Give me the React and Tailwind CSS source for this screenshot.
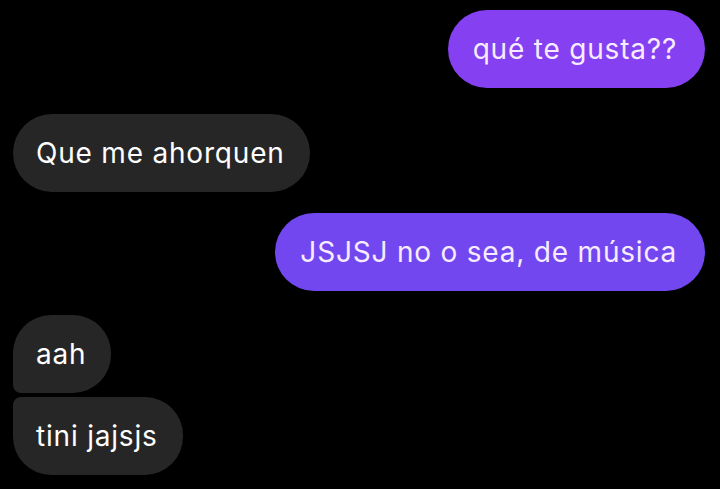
import React from 'react';

const messages = [
  { id: 1, text: 'qué te gusta??', mine: true, mt: 'mt-[10px]', bg: 'bg-[#8440f1]', shape: 'rounded-full' },
  { id: 2, text: 'Que me ahorquen', mine: false, mt: 'mt-[26px]', shape: 'rounded-full' },
  { id: 3, text: 'JSJSJ no o sea, de música', mine: true, mt: 'mt-[21px]', bg: 'bg-[#7347f0]', shape: 'rounded-full' },
  { id: 4, text: 'aah', mine: false, mt: 'mt-[24px]', shape: 'rounded-tl-[38px] rounded-r-[38px] rounded-bl-[8px]' },
  { id: 5, text: 'tini jajsjs', mine: false, mt: 'mt-[4px]', shape: 'rounded-bl-[38px] rounded-r-[38px] rounded-tl-[8px]' },
];

export default function App() {
  return (
    <div
      className="w-[720px] h-[489px] bg-black overflow-hidden flex flex-col pl-[13px] pr-[15px]"
      style={{ fontFamily: 'Inter, "Noto Sans", sans-serif' }}
    >
      {messages.map((m) => (
        <div key={m.id} className={`flex ${m.mine ? 'justify-end' : 'justify-start'} ${m.mt}`}>
          <div
            className={`h-[78px] flex items-center text-[28px] tracking-[0.8px] ${m.shape} ${
              m.mine ? `${m.bg} text-[#f7ecff] pl-[25px] pr-[28px]` : 'bg-[#262626] text-white pl-[23px] pr-[25px]'
            }`}
          >
            {m.text}
          </div>
        </div>
      ))}
    </div>
  );
}
